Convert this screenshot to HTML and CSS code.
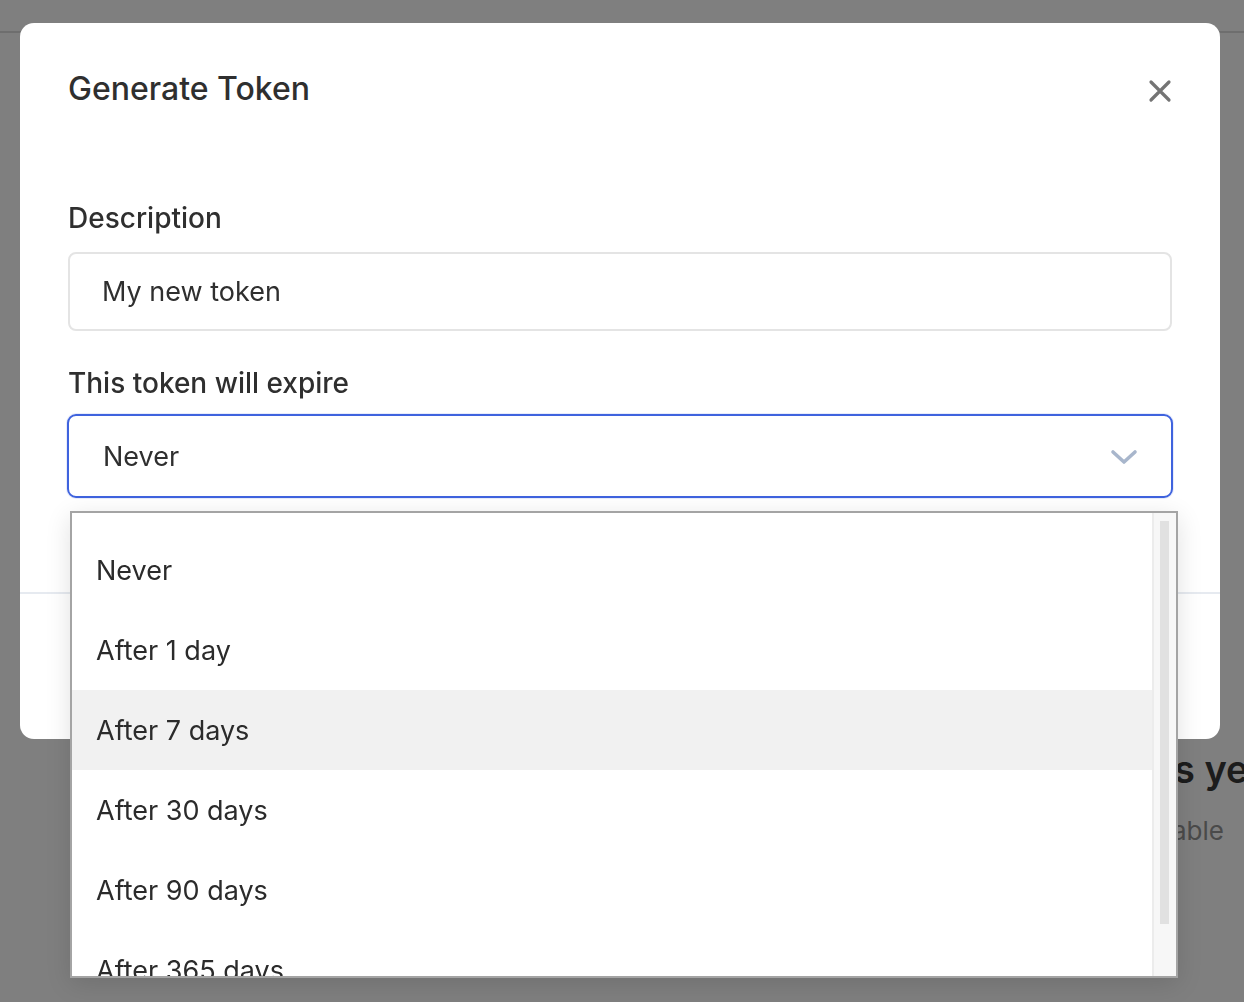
FILE: index.html
```html
<!DOCTYPE html>
<html lang="en">
<head>
<meta charset="utf-8">
<title>Generate Token</title>
<link rel="stylesheet" href="styles.css">
</head>
<body>
<div class="page">
  <div class="page-header"></div>
  <div class="page-content">
    <h2 class="empty-title">No tokens yet</h2>
    <p class="empty-text">Generate a token to make the API available</p>
  </div>
</div>

<div class="overlay">
  <div class="modal">
    <div class="modal-header">
      <h1 class="modal-title">Generate Token</h1>
      <button class="close-btn" aria-label="Close">
        <svg width="24" height="24" viewBox="0 0 24 24"><path d="M3 3 L21 21 M21 3 L3 21" stroke="#747474" stroke-width="3.2" stroke-linecap="round" fill="none"/></svg>
      </button>
    </div>
    <div class="modal-body">
      <label class="field-label label-desc">Description</label>
      <div class="text-input">My new token</div>
      <label class="field-label label-exp">This token will expire</label>
      <div class="select-input">
        <span>Never</span>
        <svg class="chevron" width="28" height="16" viewBox="0 0 28 16"><path d="M3 3 L14 13 L25 3" stroke="#a8b6cc" stroke-width="3.6" stroke-linecap="round" stroke-linejoin="round" fill="none"/></svg>
      </div>
    </div>
    <div class="modal-footer">
      <button class="btn btn-secondary">Cancel</button>
      <button class="btn btn-primary">Generate</button>
    </div>
  </div>

  <div class="dropdown">
    <ul class="options">
      <li class="option">Never</li>
      <li class="option">After 1 day</li>
      <li class="option option-hover">After 7 days</li>
      <li class="option">After 30 days</li>
      <li class="option">After 90 days</li>
      <li class="option">After 365 days</li>
    </ul>
    <div class="scrollbar">
      <div class="scroll-thumb"></div>
    </div>
  </div>
</div>
</body>
</html>
```

FILE: styles.css
```css
* { box-sizing: border-box; }

html, body {
  margin: 0;
  padding: 0;
  width: 1244px;
  height: 1002px;
  overflow: hidden;
  background: #ffffff;
  font-family: Inter, "Noto Sans", "Liberation Sans", sans-serif;
  color: #2f2f2f;
}

/* underlying page */
.page {
  width: 1244px;
  height: 1002px;
  background: #ffffff;
  overflow: hidden;
}
.page-header {
  height: 33px;
  border-bottom: 2px solid #dcdcdc;
}
.page-content {
  padding-top: 712px;
  margin-right: -18px;
  text-align: right;
}
.empty-title {
  margin: 0;
  font-size: 38px;
  line-height: 48px;
  font-weight: 600;
  color: #383838;
  white-space: nowrap;
}
.empty-text {
  margin: 22px 38px 0 0;
  font-size: 26px;
  line-height: 32px;
  color: #949494;
  white-space: nowrap;
}

/* overlay + modal */
.overlay {
  position: fixed;
  inset: 0;
  background: rgba(0, 0, 0, 0.5);
  display: flex;
  justify-content: flex-start;
  align-items: flex-start;
  padding: 23px 0 0 20px;
}
.modal {
  width: 1200px;
  height: 716px;
  background: #ffffff;
  border-radius: 14px;
  display: flex;
  flex-direction: column;
}
.modal-header {
  display: flex;
  justify-content: space-between;
  align-items: flex-start;
  padding: 48px 48px 0 48px;
}
.modal-title {
  margin: 0;
  font-size: 32px;
  line-height: 36px;
  font-weight: 500;
  color: #2f2f2f;
}
.close-btn {
  border: 0;
  background: transparent;
  padding: 0;
  margin-top: 8px;
  margin-right: 0;
  width: 24px;
  height: 24px;
  display: flex;
}

.modal-body {
  padding: 95px 48px 0 48px;
  display: flex;
  flex-direction: column;
  height: 487px;
  border-bottom: 2px solid #e6eaf0;
}
.field-label {
  font-size: 28px;
  line-height: 32px;
  font-weight: 500;
  color: #2f2f2f;
}
.label-desc { margin-bottom: 18px; }
.label-exp { margin-top: 36px; margin-bottom: 15px; }

.text-input {
  height: 79px;
  border: 2px solid #e4e4e4;
  border-radius: 8px;
  padding: 0 32px;
  display: flex;
  align-items: center;
  font-size: 27px;
  color: #2f2f2f;
}
.select-input {
  height: 84px;
  margin: 0 -1px;
  border: 2px solid #3f63de;
  border-radius: 9px;
  padding: 0 33px 0 34px;
  display: flex;
  align-items: center;
  justify-content: space-between;
  font-size: 27px;
  color: #2f2f2f;
  box-shadow: 0 0 0 1px rgba(63, 99, 222, 0.12);
}
.chevron { margin-top: 2px; }

.modal-footer {
  flex: 1;
  display: flex;
  justify-content: flex-end;
  align-items: center;
  gap: 16px;
  padding: 0 48px;
}
.btn {
  font-family: inherit;
  font-size: 22px;
  padding: 14px 28px;
  border-radius: 8px;
  border: 2px solid #e4e4e4;
  background: #fff;
}
.btn-primary { background: #3f63de; color: #fff; border-color: #3f63de; }

/* native-looking dropdown popup */
.dropdown {
  position: absolute;
  left: 70px;
  top: 511px;
  width: 1108px;
  height: 467px;
  background: #ffffff;
  border: 2px solid #a4a4a4;
  display: flex;
  overflow: hidden;
  box-shadow: 0 6px 24px rgba(0, 0, 0, 0.12);
}
.options {
  list-style: none;
  margin: 0;
  padding: 17px 0 0 0;
  flex: 1;
}
.option {
  height: 80px;
  display: flex;
  align-items: center;
  padding-left: 24px;
  font-size: 27px;
  color: #2b2b2b;
}
.option-hover { background: #f1f1f1; }

.scrollbar {
  width: 24px;
  background: #f7f7f7;
  border-left: 2px solid #ececec;
  padding: 8px 7px 0 6px;
}
.scroll-thumb {
  height: 403px;
  background: #e1e1e1;
}
```
